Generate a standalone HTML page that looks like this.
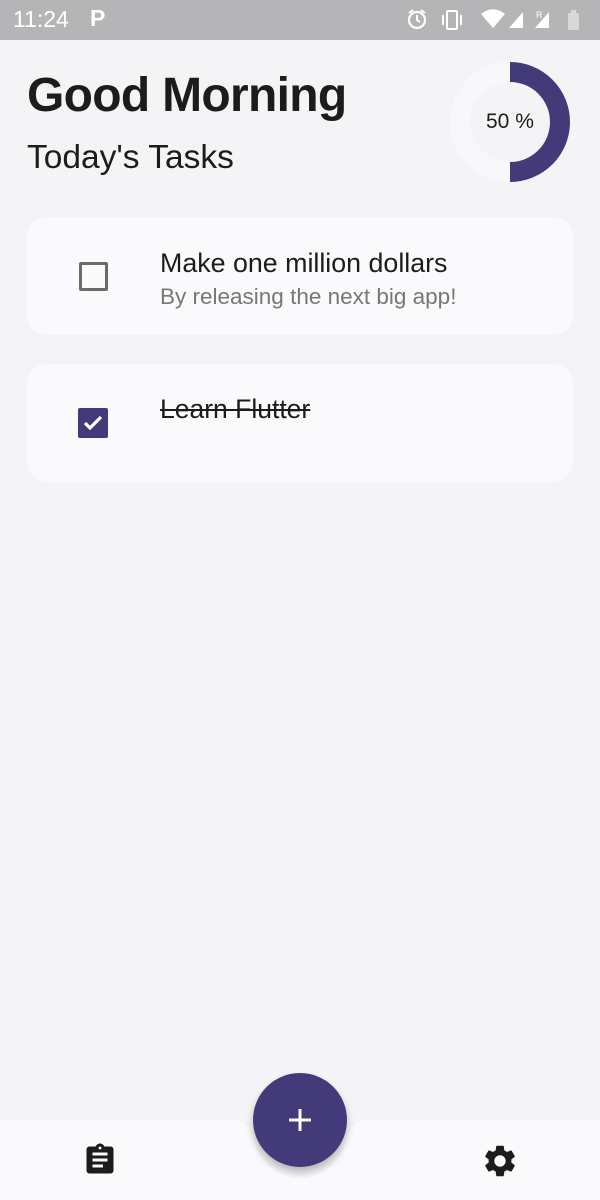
<!DOCTYPE html>
<html><head><meta charset="utf-8"><style>
*{margin:0;padding:0;box-sizing:border-box}
body{width:600px;height:1200px;background:#f4f3f6;font-family:"Liberation Sans",sans-serif;position:relative;overflow:hidden}
.sb{position:absolute;top:0;left:0;width:600px;height:40px;background:#b5b4b7;color:#fff}
.abs{position:absolute}
.card{position:absolute;left:27px;width:546px;height:118px;background:#fafafc;border-radius:20px}
.t1{color:#1c1c1c}
</style></head><body>
<div class="sb">
 <div class="abs" style="left:13px;top:6px;font-size:23px;">11:24</div>
 <div class="abs" style="left:90px;top:5px;font-size:23px;font-weight:bold;">P</div>
 <svg class="abs" style="left:400px;top:0" width="200" height="40" fill="#fff">
  <circle cx="17" cy="20" r="8" fill="none" stroke="#fff" stroke-width="2.2"/>
  <path d="M17 15v5l3 2" stroke="#fff" stroke-width="2" fill="none"/>
  <path d="M9 13l4-3M25 13l-4-3" stroke="#fff" stroke-width="2"/>
  <rect x="47" y="11" width="10" height="18" rx="1" fill="none" stroke="#fff" stroke-width="2"/>
  <rect x="42" y="15" width="2" height="10"/><rect x="60" y="15" width="2" height="10"/>
  <path d="M81 14a18 18 0 0 1 24 0l-12 14z"/>
  <path d="M109 28l14-16v16z"/>
  <path d="M135 28l14-16v16z"/>
  <text x="136" y="18" font-size="9" font-family="Liberation Sans">R</text>
  <rect x="168" y="13" width="11" height="17" rx="1.5" fill="#d8d8d8"/>
  <rect x="171" y="10" width="5" height="3" fill="#d8d8d8"/>
 </svg>
</div>
<div class="abs" style="left:27px;top:68px;font-size:48px;font-weight:bold;color:#1c1c1c;letter-spacing:-0.7px">Good Morning</div>
<div class="abs" style="left:27px;top:139px;font-size:33.5px;color:#1c1c1c">Today's Tasks</div>
<svg class="abs" style="left:440px;top:52px" width="140" height="140">
 <circle cx="70" cy="70" r="50" fill="none" stroke="#f8f8fa" stroke-width="20"/>
 <path d="M70 20a50 50 0 0 1 0 100" fill="none" stroke="#433a7a" stroke-width="20"/>
</svg>
<div class="abs" style="left:486px;top:110px;font-size:21px;color:#1c1c1c">50 %</div>

<div class="card" style="top:217px"></div>
<div class="abs" style="left:79px;top:262px;width:29px;height:29px;border:3px solid #6b6b6b;border-radius:2px"></div>
<div class="abs t1" style="left:160px;top:248px;font-size:26.8px">Make one million dollars</div>
<div class="abs" style="left:160px;top:284px;font-size:22.5px;color:#777">By releasing the next big app!</div>

<div class="card" style="top:364px"></div>
<div class="abs" style="left:78px;top:408px;width:30px;height:30px;background:#433a7a;border-radius:2px">
 <svg width="30" height="30"><path d="M7 15l5 5 11-11" fill="none" stroke="#fff" stroke-width="3.2"/></svg>
</div>
<div class="abs t1" style="left:160px;top:394px;font-size:26.5px;text-decoration:line-through">Learn Flutter</div>

<svg class="abs" style="left:0;top:1110px" width="600" height="90">
 <path d="M0 12Q0 10 2 10H232Q248 10 254 30A47 47 0 0 0 346 30Q352 10 368 10H598Q600 10 600 12V90H0z" fill="#fafafc"/>
</svg>
<div class="abs" style="left:253px;top:1073px;width:94px;height:94px;border-radius:50%;background:#433a7a;box-shadow:0 5px 8px rgba(0,0,0,0.25)"></div>
<svg class="abs" style="left:286px;top:1106px" width="28" height="28"><path d="M14 3v22M3 14h22" stroke="#fff" stroke-width="3"/></svg>
<svg class="abs" style="left:82px;top:1142px" width="36" height="36" viewBox="0 0 24 24"><path fill="#1c1c1c" d="M19 3h-4.18C14.4 1.840 13.3 1 12 1s-2.4.84-2.82 2H5c-1.1 0-2 .9-2 2v14c0 1.1.9 2 2 2h14c1.1 0 2-.9 2-2V5c0-1.1-.9-2-2-2zm-7 0c.55 0 1 .45 1 1s-.45 1-1 1-1-.45-1-1 .45-1 1-1zm2 14H7v-2h7v2zm3-4H7v-2h10v2zm0-4H7V7h10v2z"/></svg>
<svg class="abs" style="left:481px;top:1142px" width="38" height="38" viewBox="0 0 24 24"><path fill="#1c1c1c" d="M19.14 12.94c.04-.3.06-.61.06-.94 0-.32-.02-.64-.07-.94l2.030-1.58a.49.49 0 0 0 .12-.61l-1.92-3.32a.488.488 0 0 0-.59-.22l-2.39.96c-.5-.38-1.03-.7-1.62-.94l-.36-2.54a.484.484 0 0 0-.48-.41h-3.84c-.24 0-.43.17-.47.41l-.36 2.54c-.59.24-1.13.57-1.62.94l-2.39-.96c-.22-.08-.47 0-.59.22L2.74 8.87c-.12.21-.08.47.12.61l2.030 1.58c-.05.3-.09.63-.09.94s.02.64.07.94l-2.030 1.58a.49.49 0 0 0-.12.61l1.92 3.32c.12.22.37.29.59.22l2.39-.96c.5.38 1.03.7 1.62.94l.36 2.54c.05.24.24.41.48.41h3.84c.24 0 .44-.17.47-.41l.36-2.54c.59-.24 1.13-.56 1.620-.94l2.39.96c.22.08.47 0 .59-.22l1.92-3.32c.12-.22.07-.47-.12-.61l-2.010-1.58zM12 15.6c-1.98 0-3.6-1.62-3.6-3.6s1.62-3.6 3.6-3.6 3.6 1.62 3.6 3.6-1.62 3.6-3.6 3.6z"/></svg>
</body></html>
